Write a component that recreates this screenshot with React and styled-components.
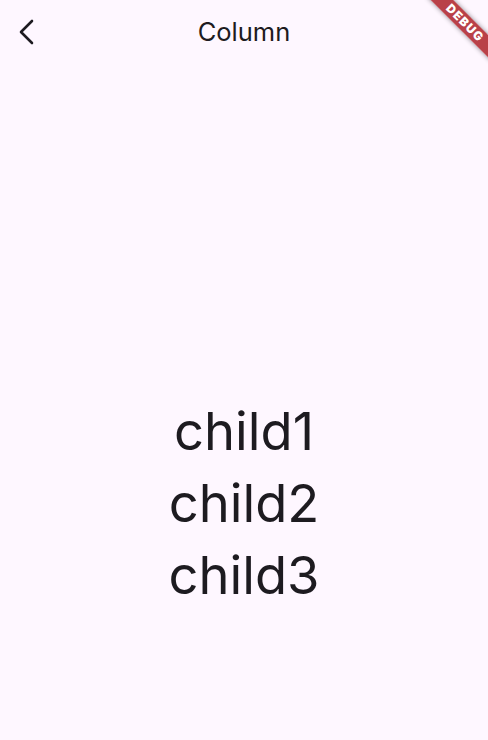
import React from 'react'
import styled, { createGlobalStyle } from 'styled-components'

const GlobalStyle = createGlobalStyle`
  html, body {
    margin: 0;
    padding: 0;
    background: #fef7ff;
  }
  body {
    font-family: Inter, "Noto Sans", sans-serif;
    color: #1d1b20;
  }
`

const Screen = styled.div`
  position: relative;
  width: 488px;
  height: 740px;
  overflow: hidden;
  display: flex;
  flex-direction: column;
  background: #fef7ff;
`

const AppBar = styled.header`
  height: 64px;
  flex: none;
  display: grid;
  grid-template-columns: 56px 1fr 56px;
  align-items: center;
`

const BackButton = styled.button`
  border: 0;
  background: none;
  padding: 0 0 0 18px;
  height: 64px;
  display: flex;
  align-items: center;
  color: #1d1b20;
  cursor: pointer;
`

const Title = styled.h1`
  margin: 0;
  text-align: center;
  font-size: 25.5px;
  font-weight: 400;
  line-height: 1;
`

const Body = styled.main`
  flex: 1;
  display: flex;
  flex-direction: column;
  align-items: center;
  padding-top: 331px;
`

const Child = styled.div`
  font-size: 52.5px;
  line-height: 72px;
  font-weight: 400;
`

// debug ribbon lies over the corner of the page
const Banner = styled.div`
  position: absolute;
  left: 420px;
  top: 15px;
  width: 90px;
  height: 16px;
  transform: rotate(45deg);
  background: rgba(170, 24, 32, 0.82);
  box-shadow: 0 0 5px rgba(0, 0, 0, 0.45);
  color: #fff;
  font-size: 12px;
  font-weight: 900;
  line-height: 16px;
  text-align: center;
  letter-spacing: 1.2px;
`

const BackIcon = () => (
  <svg width="16" height="26" viewBox="0 0 16 26" fill="none">
    <path d="M14 2 L3 13 L14 24" stroke="currentColor" strokeWidth="2.6" strokeLinecap="round" strokeLinejoin="round" />
  </svg>
)

const App = () => (
  <>
    <GlobalStyle />
    <Screen>
      <AppBar>
        <BackButton aria-label="Back">
          <BackIcon />
        </BackButton>
        <Title>Column</Title>
        <span />
      </AppBar>
      <Body>
        <Child>child1</Child>
        <Child>child2</Child>
        <Child>child3</Child>
      </Body>
      <Banner>DEBUG</Banner>
    </Screen>
  </>
)

export default App
